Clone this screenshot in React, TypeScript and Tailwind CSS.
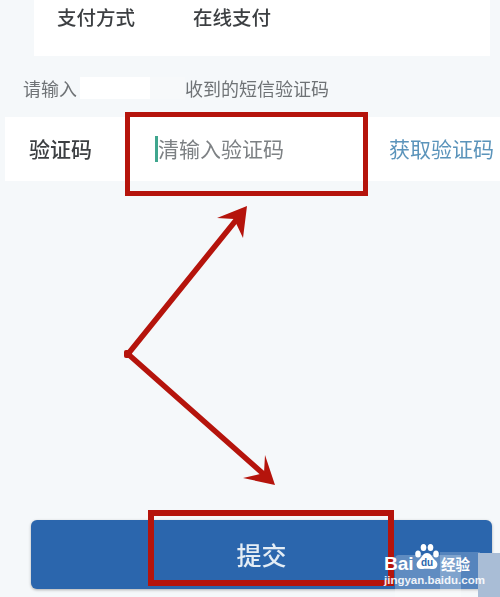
const cjk = "font-['Noto_Sans_CJK_SC','Noto_Sans',sans-serif]";

function Arrows() {
  return (
    <svg className="absolute left-0 top-0" width="500" height="597" viewBox="0 0 500 597" fill="none">
      <path d="M128 354L241 214M128 354L268 478" stroke="#b5140c" strokeWidth="5.500" />
      <rect x="124" y="350" width="8" height="8" rx="2" fill="#b5140c" />
      <path d="M247 206L217 218L234 219L243 238Z" fill="#b5140c" />
      <path d="M275 485L265 455L264 473L243 478Z" fill="#b5140c" />
    </svg>
  );
}

function Watermark() {
  return (
    <div className="absolute left-[380px] top-[540px] h-[57px] w-[120px]">
      <div className="absolute left-[15px] top-[15px] h-[42px] w-[66px] rounded-tl-[4px] bg-white/25" />
      <div className="absolute left-[60px] top-[12px] h-[40px] w-[40px] bg-white/20" />
      <div className="absolute left-[98px] top-[13px] h-[44px] w-[22px] bg-[#a9bdd6]" />
      <svg className="absolute left-[34px] top-[3px]" width="26" height="28" viewBox="0 0 26 28">
        <g fill="#fff">
          <ellipse cx="4" cy="11" rx="2.800" ry="3.500" />
          <ellipse cx="9.500" cy="4.500" rx="2.800" ry="3.500" />
          <ellipse cx="16.500" cy="4.500" rx="2.800" ry="3.500" />
          <ellipse cx="22" cy="11" rx="2.800" ry="3.500" />
          <path d="M13 10C8.500 10 8 15 4 18C1 21 3 27 8 26C10.500 25.500 15.500 25.500 18 26C23 27 25 21 22 18C18 15 17.500 10 13 10Z" />
        </g>
        <text x="13" y="23" textAnchor="middle" fontSize="10" fontFamily="'Liberation Sans',sans-serif" fontWeight="700" fill="#2b66ad">du</text>
      </svg>
      <span className="absolute left-[4px] top-[14px] font-['Liberation_Sans',sans-serif] text-[19px] leading-[20px] font-bold text-white">Bai</span>
      <span className={`absolute left-[61px] top-[14px] text-[14.500px] leading-[20px] font-bold text-white ${cjk}`}>经验</span>
      <span className="absolute left-[4px] top-[33px] font-['Liberation_Sans',sans-serif] text-[11.500px] leading-[14px] font-bold whitespace-nowrap text-white/90">jingyan.baidu.com</span>
    </div>
  );
}

export default function App() {
  return (
    <div className={`relative flex h-[597px] w-[500px] flex-col overflow-hidden bg-[#f5f8fa] ${cjk}`}>
      <div className="mr-[10px] ml-[34px] flex h-[56px] shrink-0 gap-[58px] bg-white pt-[2px] pl-[23px] text-[19.500px] leading-[30px] font-medium text-[#3c3f42] blur-[0.5px]">
        <span>支付方式</span>
        <span>在线支付</span>
      </div>

      <div className="mt-[19px] flex h-[26px] shrink-0 items-center pl-[23px] text-[18px] text-[#6f7376] blur-[0.5px]">
        <span className="w-[57px]">请输入</span>
        <span className="h-[22px] w-[70px] bg-white" />
        <span className="h-[22px] w-[35px] bg-[#f7f9fa]" />
        <span>收到的短信验证码</span>
      </div>

      <div className="mt-[16px] ml-[5px] flex h-[64px] shrink-0 items-center bg-white text-[21px] blur-[0.5px]">
        <span className="w-[150px] pl-[24px] font-medium text-[#3c3f42]">验证码</span>
        <span className="h-[26px] w-[3px] bg-[#3fa68e]" />
        <span className="w-[231px] text-[#7d8184]">清输入验证码</span>
        <span className="whitespace-nowrap text-[#5b94bb]">获取验证码</span>
      </div>

      <div className="mt-auto mr-[8px] mb-[8px] ml-[31px] flex h-[69px] shrink-0 items-center justify-center rounded-[6px] bg-[#2b66ad] px-[2px] shadow-[0_1px_3px_rgba(0,0,0,0.3)]">
        <span className="text-[25px] font-medium text-[#e4edf5] blur-[0.5px]">提交</span>
      </div>

      <div className="absolute top-[112px] left-[125px] h-[84px] w-[243px] border-[5px] border-[#b5140c]" />
      <div className="absolute top-[510px] left-[148px] h-[76px] w-[246px] border-[6px] border-[#b5140c]" />
      <Arrows />
      <Watermark />
    </div>
  );
}
